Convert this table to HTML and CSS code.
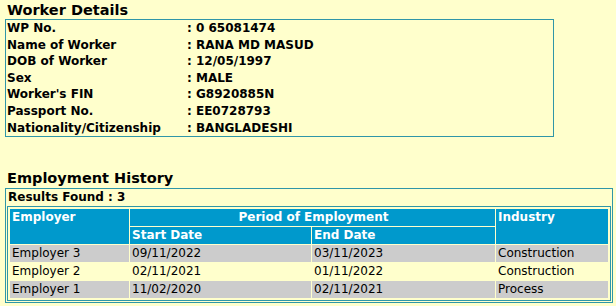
FILE: index.html
```
<!DOCTYPE html>
<html>
<head>
<meta charset="utf-8">
<link rel="stylesheet" href="styles.css">
</head>
<body>
<div class="page">
  <h2 class="title">Worker Details</h2>
  <table class="details">
    <tr><th>WP No.</th><td>: 0 65081474</td></tr>
    <tr><th>Name of Worker</th><td>: RANA MD MASUD</td></tr>
    <tr><th>DOB of Worker</th><td>: 12/05/1997</td></tr>
    <tr><th>Sex</th><td>: MALE</td></tr>
    <tr><th>Worker's FIN</th><td>: G8920885N</td></tr>
    <tr><th>Passport No.</th><td>: EE0728793</td></tr>
    <tr><th>Nationality/Citizenship</th><td>: BANGLADESHI</td></tr>
  </table>

  <h2 class="title title-emp">Employment History</h2>
  <div class="emp">
    <div class="results">Results Found : 3</div>
    <div class="wrap">
      <table class="hist">
        <colgroup>
          <col class="c-emp"><col class="c-start"><col class="c-end"><col class="c-ind">
        </colgroup>
        <tr class="head">
          <th rowspan="2">Employer</th>
          <th colspan="2" class="center">Period of Employment</th>
          <th rowspan="2">Industry</th>
        </tr>
        <tr class="head">
          <th>Start Date</th>
          <th>End Date</th>
        </tr>
        <tr class="gray"><td>Employer 3</td><td>09/11/2022</td><td>03/11/2023</td><td>Construction</td></tr>
        <tr class="yellow"><td>Employer 2</td><td>02/11/2021</td><td>01/11/2022</td><td>Construction</td></tr>
        <tr class="gray"><td>Employer 1</td><td>11/02/2020</td><td>02/11/2021</td><td>Process</td></tr>
      </table>
    </div>
  </div>
</div>
</body>
</html>
```
FILE: styles.css
```
html, body {
  margin: 0;
  padding: 0;
  background: #ffffcc;
}
body {
  font-family: "DejaVu Sans", Verdana, sans-serif;
  font-size: 12px;
  color: #000;
}
.page {
  padding: 2px 0 0 5px;
}
.title {
  margin: 0;
  padding-left: 2px;
  font-size: 14.5px;
  font-weight: bold;
  line-height: 17px;
}
.title-emp {
  margin-top: 33px;
}
.details {
  width: 549px;
  box-sizing: border-box;
  border: 1px solid #2f96a8;
  border-collapse: separate;
  border-spacing: 0;
}
.details th,
.details td {
  padding: 0 0 0 1px;
  text-align: left;
  font-weight: bold;
  line-height: 16.6px;
  white-space: nowrap;
}
.details th {
  width: 179px;
}
.emp {
  margin-top: 1px;
  width: 608px;
  box-sizing: border-box;
  border: 1px solid #2f96a8;
  padding: 0 1px 1px 1px;
}
.results {
  font-weight: bold;
  line-height: 17px;
  padding-left: 1px;
}
.wrap {
  border: 1px solid #2f96a8;
  padding: 1px;
}
.hist {
  width: 100%;
  border-collapse: separate;
  border-spacing: 1px;
  table-layout: fixed;
}
.c-emp { width: 119px; }
.c-start { width: 181px; }
.c-end { width: 183px; }
.c-ind { width: 112px; }
.hist th,
.hist td {
  padding: 0 0 0 2px;
  height: 17px;
  line-height: 17px;
  text-align: left;
  vertical-align: top;
  white-space: nowrap;
}
.hist th {
  background: #0099cc;
  color: #fff;
  font-weight: bold;
}
.hist th.center {
  text-align: center;
}
.hist .gray td {
  background: #cccccc;
}
.hist .yellow td {
  background: #ffffcc;
}
```
